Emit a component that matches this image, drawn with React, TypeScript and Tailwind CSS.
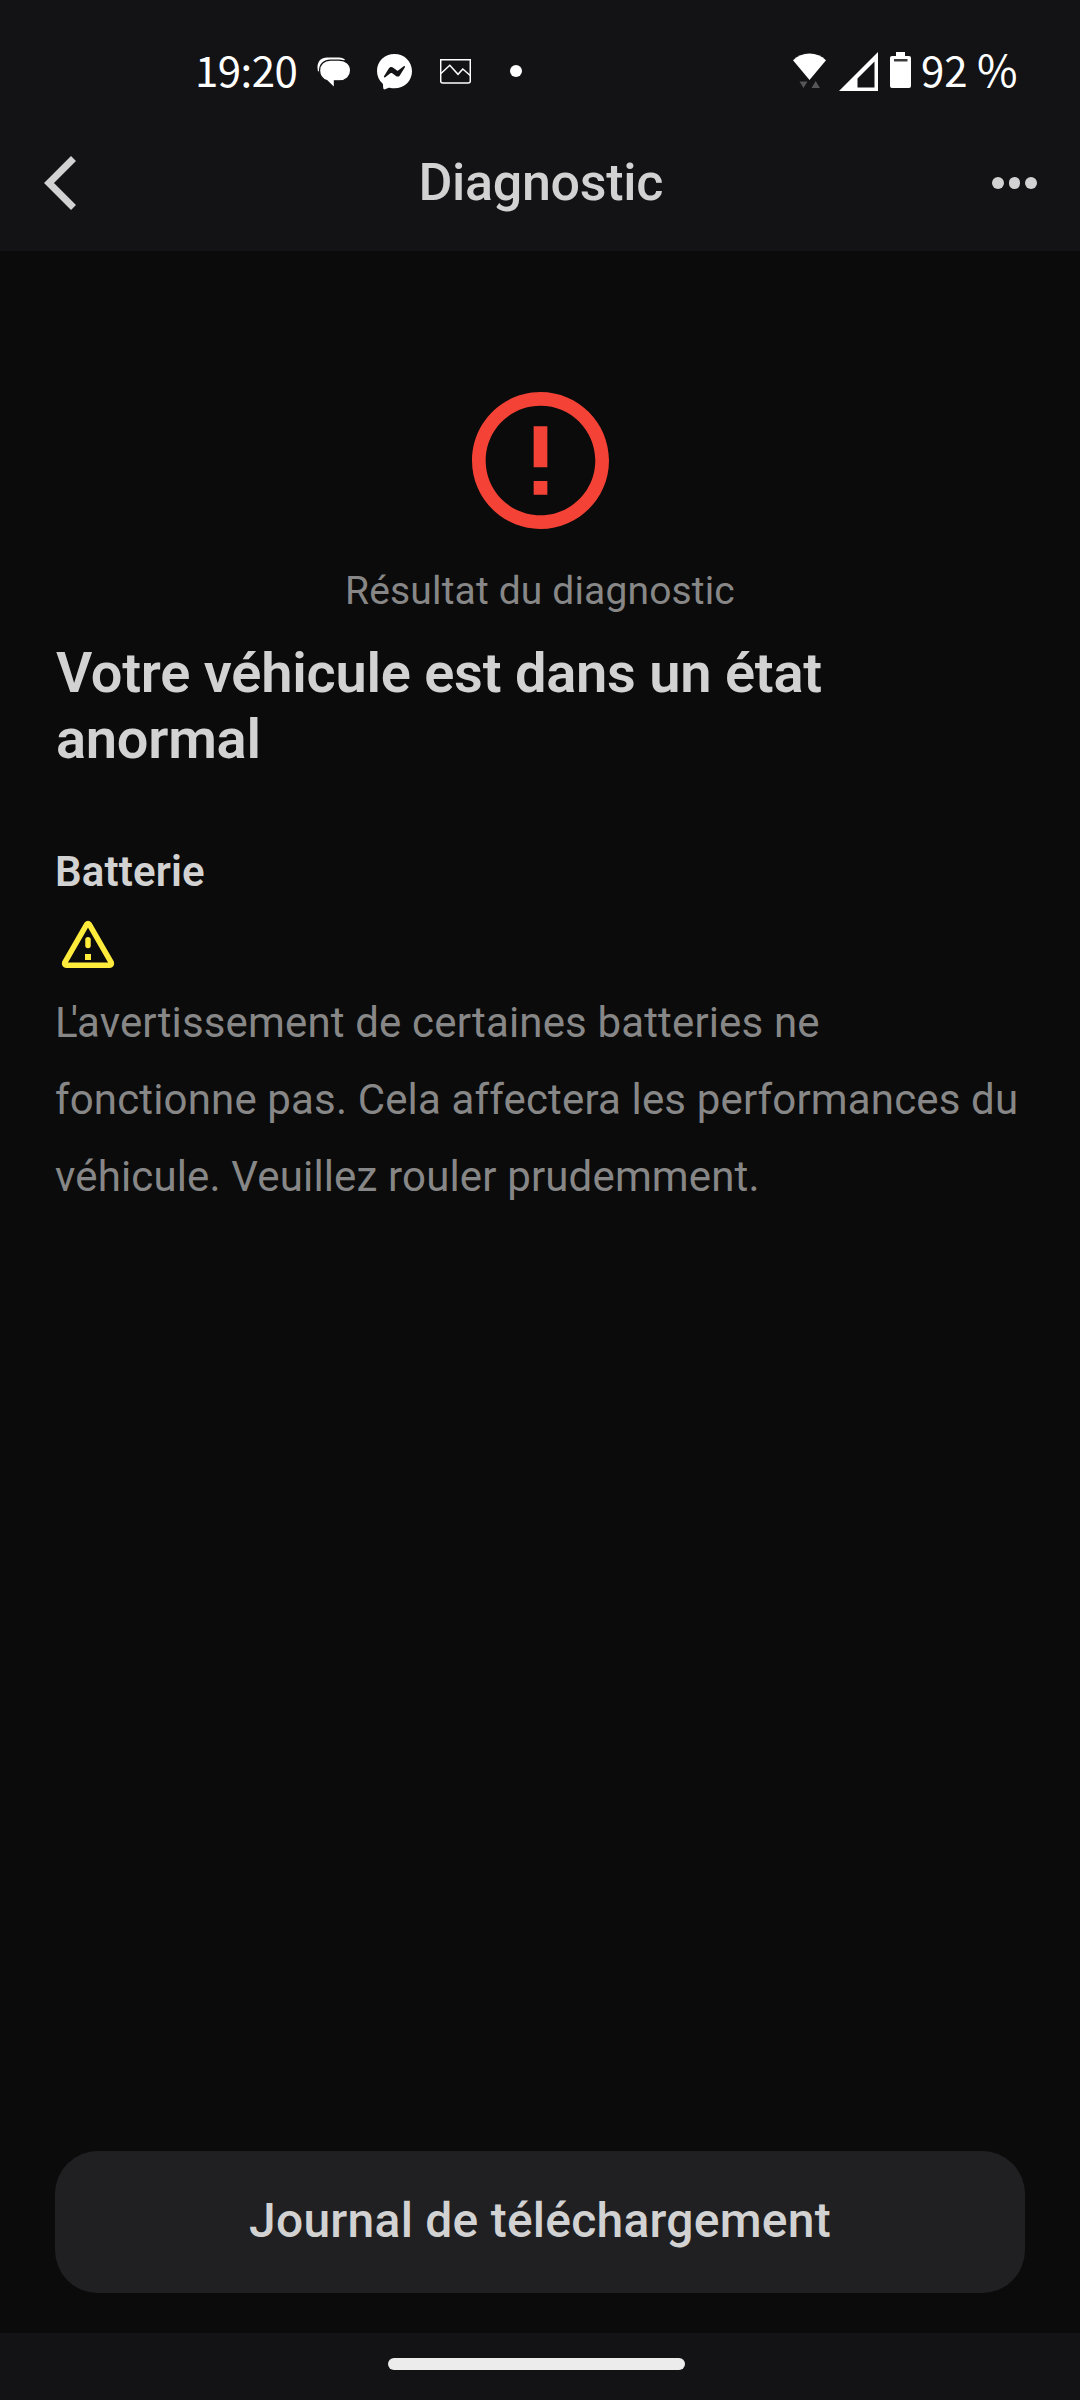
const STATUS_FONT = "font-['Noto_Sans_CJK_SC','Noto_Sans',sans-serif]";

function ChatIcon() {
  return (
    <svg width="34" height="32" viewBox="0 0 34 32" className="ml-[19px] mt-[3px]">
      <path d="M1 14.500C-1 6 3 .6 10 .6h12c3 0 5 1 6.200 2.300" fill="#fff" />
      <path
        d="M13.500 3.200h8.500c7 0 11.600 4 11.600 10.200 0 6-4.600 10.400-11.200 10.400h-5V31l-7.600-7.400C5 21.800 2.600 18 2.600 13.400 2.600 7.200 7 3.200 13.500 3.200z"
        fill="#fff"
        stroke="#131315"
        strokeWidth="1.2"
      />
    </svg>
  );
}

function MessengerIcon() {
  return (
    <svg width="35" height="36" viewBox="0 0 35 36" className="ml-[26px] mt-px">
      <path
        d="M17.500 0C7.700 0 0 7.200 0 17c0 5.100 2.100 9.500 5.500 12.500.3.300.5.700.5 1.100l.2 3.500c.1 1 1 1.600 1.900 1.200l3.600-1.500c.3-.1.6-.1.900-.1 1.500.4 3.200.6 4.900.6C27.300 34.300 35 27 35 17.200S27.300 0 17.500 0z"
        fill="#fff"
      />
      <path
        d="M7 22.200l5.100-8.100c.8-1.300 2.600-1.600 3.800-.7l4.100 3c.4.300.9.300 1.200 0l5.500-4.200c.7-.5 1.700.3 1.200 1.100l-5.100 8.100c-.8 1.300-2.600 1.600-3.800.7l-4.100-3c-.4-.3-.9-.3-1.200 0l-5.500 4.200c-.7.500-1.700-.3-1.200-1.100z"
        fill="#131315"
      />
    </svg>
  );
}

function PictureIcon() {
  return (
    <svg
      width="31"
      height="25"
      viewBox="0 0 31 25"
      fill="none"
      stroke="#fff"
      strokeWidth="1.5"
      className="ml-[28px]"
    >
      <path d="M.7.700h29.600v21.300a2 2 0 0 1-2 2H2.700a2 2 0 0 1-2-2z" />
      <path d="M1 14.500l8.800-8.200 8.200 9 4.800-5.300 7.400 6.500" />
    </svg>
  );
}

function WifiIcon() {
  return (
    <svg width="33" height="36" viewBox="0 0 33 36">
      <path d="M16.500 27L0 7.200C4.500 2.800 10 .5 16.500.500S28.500 2.800 33 7.200z" fill="#fff" />
      <path d="M6.500 28.500h8L10.500 35z M18.500 35l4.200-7 4.200 7z" fill="#55555a" />
    </svg>
  );
}

function SignalIcon() {
  return (
    <svg width="39" height="39" viewBox="0 0 39 39" className="ml-[13px]">
      <path d="M39 0v39H0z M35.500 9.500L18.500 26.500v9h17z" fill="#fff" fillRule="evenodd" />
    </svg>
  );
}

function BatteryIcon() {
  return (
    <svg width="21" height="36" viewBox="0 0 21 36" className="mb-[2px] ml-[12px]">
      <path
        d="M6 0h9v4h4a2 2 0 0 1 2 2v28a2 2 0 0 1-2 2H2a2 2 0 0 1-2-2V6a2 2 0 0 1 2-2h4z"
        fill="#fff"
      />
      <path d="M4 7h13.500v2.500H4z" fill="#3c3c3e" />
    </svg>
  );
}

function StatusBar() {
  return (
    <div
      className={`flex h-[142px] items-center justify-between pl-[195px] pr-[61px] text-[42px] leading-none text-white ${STATUS_FONT}`}
    >
      <div className="flex items-center">
        <span className="w-[103px] whitespace-nowrap pb-1 tracking-[-0.5px]">19:20</span>
        <ChatIcon />
        <MessengerIcon />
        <PictureIcon />
        <span className="ml-[39px] size-3 rounded-full bg-white" />
      </div>
      <div className="flex items-center">
        <WifiIcon />
        <SignalIcon />
        <BatteryIcon />
        <span className="ml-[10px] w-[98px] whitespace-nowrap pb-1">
          92 <span className="text-[44px] leading-[0]">%</span>
        </span>
      </div>
    </div>
  );
}

function TitleBar() {
  return (
    <header className="flex h-[109px] items-start justify-between pl-[44px] pr-[43px]">
      <button aria-label="Retour" className="mt-[14px] w-[45px]">
        <svg width="33" height="55" viewBox="0 0 33 55" fill="none" stroke="#d2d2d3" strokeWidth="7">
          <path d="M29.500 2.500L5 27l24.500 24.500" />
        </svg>
      </button>
      <h1 className="mt-[10px] text-[52px] font-medium leading-[61px] tracking-[-0.3px]">
        Diagnostic
      </h1>
      <button aria-label="Plus" className="mt-[35px] flex gap-[5px]">
        <span className="size-[11.5px] rounded-full bg-[#d2d2d3]" />
        <span className="size-[11.5px] rounded-full bg-[#d2d2d3]" />
        <span className="size-[11.5px] rounded-full bg-[#d2d2d3]" />
      </button>
    </header>
  );
}

export default function App() {
  return (
    <div className="flex h-[2400px] w-[1080px] flex-col bg-[#0b0b0b] font-[Roboto,sans-serif] text-[#d2d2d3]">
      {/* Top bars */}
      <div className="bg-[#131315]">
        <StatusBar />
        <TitleBar />
      </div>

      {/* Result */}
      <main className="flex flex-1 flex-col px-[55px] pt-[141px]">
        <svg width="137" height="137" viewBox="2 2 20 20" className="self-center" fill="#f44336">
          <path d="M11 15h2v2h-2v-2zm0-8h2v6h-2V7zm.990-5C6.470 2 2 6.480 2 12s4.470 10 9.990 10C17.520 22 22 17.520 22 12S17.520 2 11.990 2zM12 20c-4.420 0-8-3.580-8-8s3.580-8 8-8 8 3.580 8 8-3.580 8-8 8z" />
        </svg>
        <p className="mt-[39px] text-center text-[39px] leading-[46px] tracking-[0.15px] text-[#878787]">
          Résultat du diagnostic
        </p>
        <h2 className="ml-px mt-[26px] text-[56px] font-semibold leading-[66px] tracking-[-0.25px]">
          Votre véhicule est dans un état
          <br />
          anormal
        </h2>

        <h3 className="mt-[75px] text-[42px] font-semibold leading-[50px] tracking-[0.15px]">
          Batterie
        </h3>
        <svg
          width="66"
          height="66"
          viewBox="0 0 66 66"
          fill="none"
          stroke="#ffeb3b"
          strokeWidth="5.5"
          strokeLinejoin="round"
          className="mt-[13px]"
        >
          <path d="M31.700 14.300Q33 12.900 34.300 14.300L56.300 52.600Q57 55.200 54.500 55.200h-43Q9 55.200 9.700 52.600z" />
          <path d="M33 29.800v5.700" strokeLinecap="round" />
          <path d="M30 44h6v6h-6z" fill="#ffeb3b" stroke="none" />
        </svg>
        <p className="mt-[8px] text-[42px] leading-[77px] tracking-[0.15px] text-[#878787]">
          <span className="tracking-[-7px]">L</span>
          <span className="tracking-[-1px]">'</span>avertissement de certaines batteries ne
          <br />
          fonctionne pas. Cela affectera les performances du
          <br />
          véhicule. Veuillez rouler prudemment.
        </p>

        <button className="mb-[40px] mt-auto h-[142px] rounded-[43px] bg-[#202022] pb-[3px] text-[48px] font-medium tracking-[0.24px]">
          Journal de téléchargement
        </button>
      </main>

      {/* Gesture bar */}
      <div className="flex h-[67px] justify-center bg-[#131315] pr-[7px] pt-[25px]">
        <div className="h-3 w-[297px] rounded-full bg-[#ececec]" />
      </div>
    </div>
  );
}
